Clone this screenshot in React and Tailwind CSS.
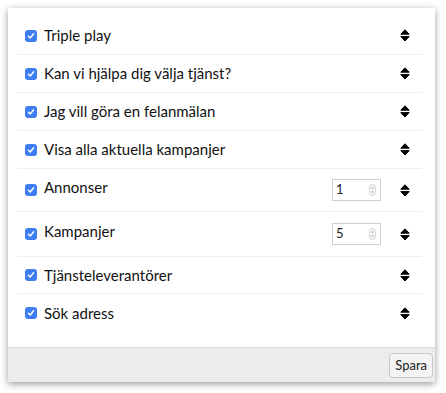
import React from 'react';

const rows = [
  { label: 'Triple play', h: 'h-[38px]' },
  { label: 'Kan vi hjälpa dig välja tjänst?', h: 'h-[38px]' },
  { label: 'Jag vill göra en felanmälan', h: 'h-[38px]' },
  { label: 'Visa alla aktuella kampanjer', h: 'h-[38px]' },
  { label: 'Annonser', count: 1, h: 'h-[43px]' },
  { label: 'Kampanjer', count: 5, h: 'h-[45px]' },
  { label: 'Tjänsteleverantörer', h: 'h-[37px]' },
  { label: 'Sök adress', h: 'h-[38px]' },
];

function Checkbox() {
  return (
    <span className="w-[12px] h-[12px] rounded-[3px] bg-[#3f7ef2] flex items-center justify-center shrink-0">
      <svg width="8" height="8" viewBox="0 0 8 8">
        <path d="M1.4 4.2 L3.2 6 L6.6 1.8" fill="none" stroke="white" strokeWidth="1.4" strokeLinecap="round" strokeLinejoin="round" />
      </svg>
    </span>
  );
}

function SortIcon() {
  return (
    <svg width="10" height="13" viewBox="0 0 10 13" className="shrink-0">
      <path d="M5 0.8 L9.2 5.2 L0.8 5.2 Z" fill="#000" stroke="#000" strokeWidth="1" strokeLinejoin="round" />
      <path d="M0.8 7.6 L9.2 7.6 L5 12 Z" fill="#000" stroke="#000" strokeWidth="1" strokeLinejoin="round" />
    </svg>
  );
}

function NumberBox({ value }) {
  return (
    <div className="w-[49px] h-[22px] border border-[#cfcfcf] bg-white flex items-center justify-between pl-[3px] pr-[4px] text-[13px] text-[#222]">
      <span>{value}</span>
      {/* spinner */}
      <svg width="7" height="12" viewBox="0 0 7 12">
        <rect x="0.5" y="0.5" width="6" height="11" rx="3" fill="#fafafa" stroke="#c8c8c8" strokeWidth="0.8" />
        <path d="M2 4.6 L3.5 3 L5 4.6 Z" fill="#9a9a9a" />
        <path d="M2 7.4 L3.5 9 L5 7.4 Z" fill="#9a9a9a" />
      </svg>
    </div>
  );
}

export default function App() {
  return (
    <div className="w-[446px] h-[393px] bg-white pt-[8px] pl-[8px]" style={{ fontFamily: 'Lato, "Open Sans", sans-serif' }}>
      <div className="w-[427px] h-[374px] bg-white flex flex-col shadow-[0_2px_7px_rgba(0,0,0,0.4)]">
        <div className="flex-1 pl-[9px] pr-[13px] pt-[9px]">
          {rows.map((row, i) => (
            <div
              key={row.label}
              className={`flex items-center pl-[8px] pr-[12px] ${row.h} ${i < rows.length - 1 ? 'border-b border-[#efefef]' : ''}`}
            >
              <Checkbox />
              <span className={`ml-[7px] text-[15px] text-[#111] flex-1 ${row.count ? 'mb-[6px]' : ''}`}>{row.label}</span>
              {row.count && (
                <div className="mr-[19px]">
                  <NumberBox value={row.count} />
                </div>
              )}
              <SortIcon />
            </div>
          ))}
        </div>
        <div className="h-[35px] bg-[#ececec] border-t border-[#dddddd] flex items-center justify-end pr-[2px]">
          <button className="h-[25px] px-[5px] mt-[1px] bg-[#f4f4f4] border border-[#c8c8c8] rounded-[4px] text-[13px] text-[#222]">
            Spara
          </button>
        </div>
      </div>
    </div>
  );
}
